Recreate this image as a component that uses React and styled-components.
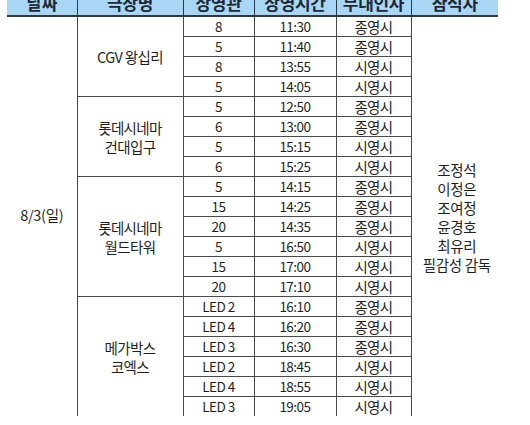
import React from "react";
import styled, { createGlobalStyle } from "styled-components";

const GlobalStyle = createGlobalStyle`
  body {
    margin: 0;
    background: #fff;
    font-family: "Noto Sans CJK KR", "Noto Sans", sans-serif;
  }
`;

const Page = styled.div`
  width: 530px;
  height: 425px;
  overflow: hidden;
  background: #fff;
`;

const Table = styled.table`
  width: 491px;
  margin: -9px 0 0 7px;
  border-collapse: collapse;
  table-layout: fixed;
  color: #1f1f1f;
  font-size: 13px;
  letter-spacing: -0.3px;
`;

const HeadCell = styled.th`
  height: 24px;
  padding: 0;
  background: #aad6f6;
  color: #1d2733;
  font-size: 17px;
  line-height: 22px;
  font-weight: 700;
  text-align: center;
  vertical-align: middle;
  border-bottom: 2px solid #2c3a48;
  border-left: ${(p) => (p.$first ? "none" : "1px solid #2c3a48")};
`;

const Cell = styled.td`
  height: 19px;
  padding: 0;
  line-height: 19px;
  font-size: ${(p) => (p.$ko ? "14.5px" : "13.5px")};
  letter-spacing: ${(p) => (p.$ko ? "-0.6px" : "-0.5px")};
  text-align: center;
  vertical-align: middle;
  border-top: 1px solid #4a4a4a;
  border-left: 1px solid #4a4a4a;
`;

const DateCell = styled.td`
  padding: 0 0 4px;
  font-size: 14.5px;
  text-align: center;
  vertical-align: middle;
`;

const TheaterCell = styled(Cell)`
  line-height: 19px;
  white-space: pre-line;
`;

const AttendeeCell = styled.td`
  padding: 0 0 0 4px;
  font-size: 14.5px;
  line-height: 19px;
  text-align: center;
  vertical-align: middle;
  border-left: 1px solid #4a4a4a;
  white-space: pre-line;
`;

const widths = [70, 106, 71, 82, 75, 87];
const heads = ["날짜", "극장명", "상영관", "상영시간", "무대인사", "참석자"];

const groups = [
  {
    name: "CGV 왕십리",
    rows: [
      ["8", "11:30", "종영시"],
      ["5", "11:40", "종영시"],
      ["8", "13:55", "시영시"],
      ["5", "14:05", "시영시"],
    ],
  },
  {
    name: "롯데시네마\n건대입구",
    rows: [
      ["5", "12:50", "종영시"],
      ["6", "13:00", "종영시"],
      ["5", "15:15", "시영시"],
      ["6", "15:25", "시영시"],
    ],
  },
  {
    name: "롯데시네마\n월드타워",
    rows: [
      ["5", "14:15", "종영시"],
      ["15", "14:25", "종영시"],
      ["20", "14:35", "종영시"],
      ["5", "16:50", "시영시"],
      ["15", "17:00", "시영시"],
      ["20", "17:10", "시영시"],
    ],
  },
  {
    name: "메가박스\n코엑스",
    rows: [
      ["LED 2", "16:10", "종영시"],
      ["LED 4", "16:20", "종영시"],
      ["LED 3", "16:30", "종영시"],
      ["LED 2", "18:45", "시영시"],
      ["LED 4", "18:55", "시영시"],
      ["LED 3", "19:05", "시영시"],
    ],
  },
];

const totalRows = groups.reduce((n, g) => n + g.rows.length, 0);
const attendees = "조정석\n이정은\n조여정\n윤경호\n최유리\n필감성 감독";

export default function App() {
  return (
    <Page>
      <GlobalStyle />
      <Table>
        <colgroup>
          {widths.map((w, i) => (
            <col key={i} style={{ width: w }} />
          ))}
        </colgroup>
        <thead>
          <tr>
            {heads.map((h, i) => (
              <HeadCell key={h} $first={i === 0}>
                {h}
              </HeadCell>
            ))}
          </tr>
        </thead>
        <tbody>
          {groups.map((g, gi) =>
            g.rows.map((r, ri) => (
              <tr key={gi + "-" + ri}>
                {gi === 0 && ri === 0 && <DateCell rowSpan={totalRows}>8/3(일)</DateCell>}
                {ri === 0 && (
                  <TheaterCell $ko rowSpan={g.rows.length}>
                    {g.name}
                  </TheaterCell>
                )}
                <Cell>{r[0]}</Cell>
                <Cell>{r[1]}</Cell>
                <Cell $ko>{r[2]}</Cell>
                {gi === 0 && ri === 0 && (
                  <AttendeeCell rowSpan={totalRows}>{attendees}</AttendeeCell>
                )}
              </tr>
            ))
          )}
        </tbody>
      </Table>
    </Page>
  );
}
